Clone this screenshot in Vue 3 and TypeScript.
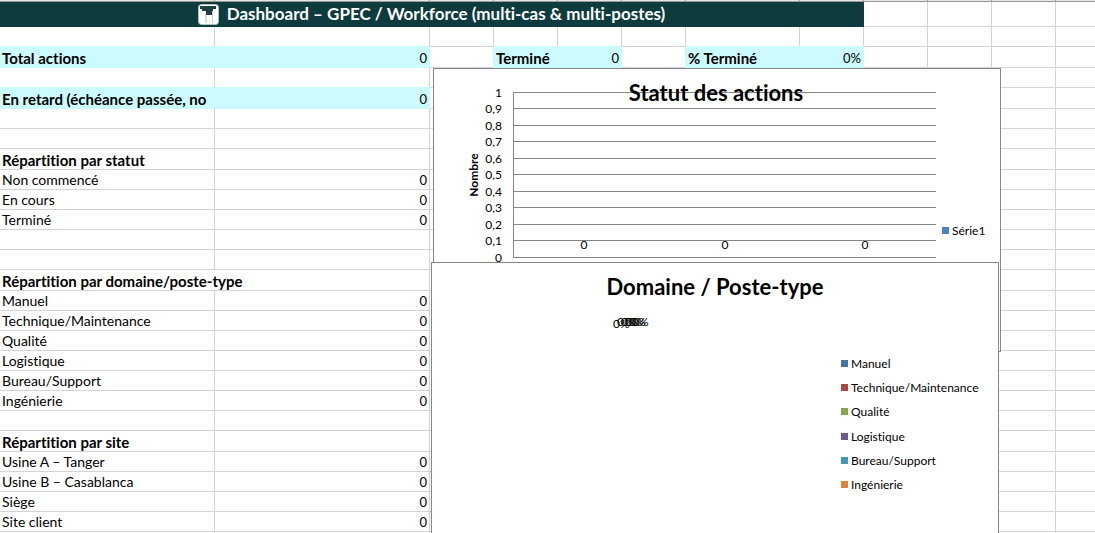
<script setup lang="ts">
interface Cell {
  text?: string
  span?: number
  kind?: 'fill'
  bold?: boolean
  right?: boolean
}

interface Row {
  tall?: boolean
  cells: Cell[]
}

const COLUMNS = 12

const blank = (count: number): Cell[] => Array.from({ length: count }, () => ({}))

const fillRow = (cells: Cell[], tall = false): Row => {
  const used = cells.reduce((sum, cell) => sum + (cell.span ?? 1), 0)
  return { tall, cells: [...cells, ...blank(COLUMNS - used)] }
}

const empty = (): Row => fillRow([])
const heading = (text: string): Row => fillRow([{ text, bold: true }], true)
const count = (text: string): Row => fillRow([{ text }, { text: '0', right: true }])

const rows: Row[] = [
  empty(),
  fillRow(
    [
      { text: 'Total actions', kind: 'fill', bold: true },
      { text: '0', kind: 'fill', right: true },
      {},
      { text: 'Terminé', kind: 'fill', bold: true },
      { text: '0', kind: 'fill', right: true },
      {},
      { text: '% Terminé', kind: 'fill', bold: true },
      { text: '0%', kind: 'fill', right: true },
    ],
    true,
  ),
  empty(),
  fillRow(
    [
      { text: 'En retard (échéance passée, no', kind: 'fill', bold: true },
      { text: '0', kind: 'fill', right: true },
    ],
    true,
  ),
  empty(),
  empty(),
  heading('Répartition par statut'),
  count('Non commencé'),
  count('En cours'),
  count('Terminé'),
  empty(),
  empty(),
  fillRow([{ text: 'Répartition par domaine/poste-type', bold: true, span: 2 }], true),
  count('Manuel'),
  count('Technique/Maintenance'),
  count('Qualité'),
  count('Logistique'),
  count('Bureau/Support'),
  count('Ingénierie'),
  empty(),
  heading('Répartition par site'),
  count('Usine A – Tanger'),
  count('Usine B – Casablanca'),
  count('Siège'),
  count('Site client'),
  empty(),
]

const ticks = ['1', '0,9', '0,8', '0,7', '0,6', '0,5', '0,4', '0,3', '0,2', '0,1', '0'].map(
  (label, i) => ({ label, y: Math.floor(24 + i * 16.5) }),
)

const bars = [150, 291, 431]

const domains = [
  { name: 'Manuel', color: '#4572a7' },
  { name: 'Technique/Maintenance', color: '#aa4643' },
  { name: 'Qualité', color: '#89a54e' },
  { name: 'Logistique', color: '#71588f' },
  { name: 'Bureau/Support', color: '#4198af' },
  { name: 'Ingénierie', color: '#db843d' },
]

const slices = [
  { x: 181, y: 65 },
  { x: 185, y: 63 },
  { x: 189, y: 63 },
  { x: 193, y: 63 },
  { x: 197, y: 63 },
  { x: 200, y: 63 },
]
</script>

<template>
  <main class="sheet">
    <table class="grid">
      <colgroup>
        <col class="wide" />
        <col class="wide" />
        <col class="std" />
        <col class="std" />
        <col class="std" />
        <col class="std" />
        <col class="mid" />
        <col class="std" />
        <col class="std" />
        <col class="std" />
        <col class="std" />
        <col />
      </colgroup>
      <thead>
        <tr class="letters">
          <td v-for="n in COLUMNS" :key="n"></td>
        </tr>
        <tr class="banner">
          <th colspan="8" scope="colgroup">
            <div class="title">
              <svg class="logo" viewBox="0 0 21 21" aria-hidden="true">
                <rect x="0.5" y="0.5" width="20" height="20" rx="3" fill="#fff" stroke="#b4bebf" />
                <path d="M2 2h16v3h-3v6h-2v3h-3v-3h-2v-4h-4v-2h-2z" fill="#1d4043" />
                <path d="M9 11h5v8h-5z" fill="#fff" />
                <path d="M7.500 10v9" stroke="#f3cdc5" />
                <path d="M8.500 11v8" stroke="#c3f3f7" />
                <path d="M11.500 14v5" stroke="#f7f0c8" />
                <path d="M14.500 7v12" stroke="#bcc9f0" />
              </svg>
              <span>Dashboard – GPEC / Workforce (multi-cas &amp; multi-postes)</span>
            </div>
          </th>
          <td v-for="n in 4" :key="n"></td>
        </tr>
      </thead>
      <tbody>
        <tr v-for="(row, r) in rows" :key="r" :class="{ tall: row.tall }">
          <td
            v-for="(cell, c) in row.cells"
            :key="c"
            :colspan="cell.span ?? 1"
            :class="[cell.kind, { bold: cell.bold, right: cell.right }]"
          >{{ cell.text }}</td>
        </tr>
      </tbody>
    </table>

    <figure class="chart status">
      <svg width="566" height="282" role="img" aria-label="Statut des actions">
        <g class="rule">
          <path v-for="t in ticks" :key="t.label" :d="`M79 ${t.y - 0.5}H502`" />
          <path d="M79.500 23V189" />
        </g>
        <text class="heading" x="282" y="32">Statut des actions</text>
        <text v-for="t in ticks" :key="t.label" class="tick" x="68" :y="t.y + 4">{{ t.label }}</text>
        <text class="axis" transform="translate(44 106) rotate(-90)">Nombre</text>
        <text v-for="x in bars" :key="x" class="value" :x="x" y="180">0</text>
        <rect x="508" y="158" width="7" height="7" fill="#4f81bd" />
        <text class="label" x="518" y="166">Série1</text>
      </svg>
    </figure>

    <figure class="chart domain">
      <svg width="566" height="282" role="img" aria-label="Domaine / Poste-type">
        <text class="heading" x="283" y="32">Domaine / Poste-type</text>
        <text v-for="s in slices" :key="s.x" class="label" :x="s.x" :y="s.y">0%</text>
        <g v-for="(d, i) in domains" :key="d.name">
          <rect x="409" :y="97 + Math.round(i * 24.2)" width="7" height="7" :fill="d.color" />
          <text class="label" x="419" :y="105 + Math.round(i * 24.2)">{{ d.name }}</text>
        </g>
      </svg>
    </figure>
  </main>
</template>

<style>
body {
  margin: 0;
  background: #fff;
}
</style>

<style scoped>
.sheet {
  position: relative;
  height: 100vh;
  overflow: hidden;
  font-family: Lato, "Open Sans", sans-serif;
  font-size: 14px;
  font-variant-ligatures: none;
  color: #000;
}

.grid {
  width: 100%;
  table-layout: fixed;
  border-collapse: separate;
  border-spacing: 0;
}

.wide {
  width: 215px;
}

.std {
  width: 64px;
}

.mid {
  width: 114px;
}

td,
th {
  box-sizing: border-box;
  height: 20px;
  padding: 0 2px;
  border-right: 1px solid #d4d4d4;
  border-bottom: 1px solid #d4d4d4;
  line-height: 18px;
  white-space: nowrap;
  overflow: hidden;
  text-align: left;
  vertical-align: bottom;
}

td:last-child {
  border-right: 0;
}

.tall td {
  height: 21px;
}

.letters td {
  height: 2px;
  line-height: 0;
  padding: 0;
  background: #e6e6e6;
  border-color: #999;
}

.banner th {
  height: 25px;
  padding: 0;
  background: #0d3b3e;
  border-color: #0d3b3e;
  vertical-align: middle;
}

.title {
  display: flex;
  align-items: center;
  justify-content: center;
  gap: 8px;
  color: #fff;
  font-size: 17px;
  line-height: 24px;
}

.logo {
  width: 21px;
  height: 21px;
}

.fill {
  position: relative;
  background: #ccfbff;
  border-color: #ccfbff;
  box-shadow: 0 -1px 0 #ccfbff, -1px 0 0 #ccfbff;
}

.bold {
  font-size: 15px;
  font-weight: 700;
}

.right {
  font-size: 13px;
  text-align: right;
}

.chart {
  position: absolute;
  margin: 0;
  border: 1px solid #868686;
  background: #fff;
}

.chart svg {
  display: block;
}

.status {
  left: 433px;
  top: 68px;
}

.domain {
  left: 431px;
  top: 262px;
}

.rule {
  fill: none;
  stroke: #868686;
}

.heading {
  font-size: 22px;
  font-weight: 700;
  text-anchor: middle;
}

.tick,
.value,
.label {
  font-size: 12px;
}

.tick {
  text-anchor: end;
}

.value {
  text-anchor: middle;
}

.axis {
  font-size: 12px;
  font-weight: 700;
  text-anchor: middle;
}
</style>
